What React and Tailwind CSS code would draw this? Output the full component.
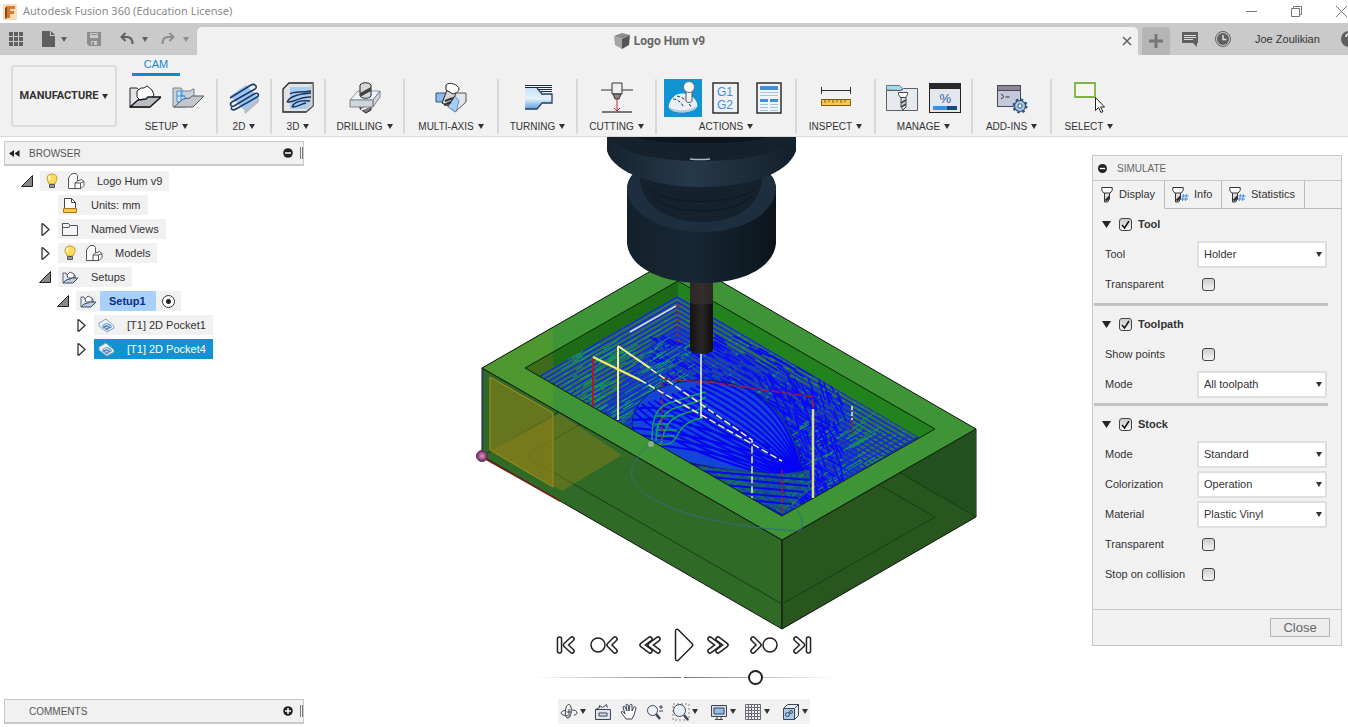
import React from "react";
import clsx from "clsx";

const Caret = ({ className }) => (
    <svg viewBox="0 0 6 5" className={clsx("h-[5px] w-[6px] shrink-0", className)} fill="currentColor">
        <path d="M0 0h6L3 5z" />
    </svg>
);

/* ---------- ribbon icons ---------- */

const SetupIcon = () => (
    <svg width="32" height="32" viewBox="0 0 32 32" strokeLinejoin="round">
        <path d="M1 6h7l3 3h10v16H1z" fill="#e4e4e8" stroke="#222" />
        <path d="M8 9l4-3h3l3-2 5 4 2 5-4 5-9 1-4-4z" fill="#fff" stroke="#222" />
        <path d="M1 25l8-7 8-1 2-2h13L21 25z" fill="#b9bdc4" stroke="#111" strokeWidth="1.4" />
    </svg>
);

const SetupFolderIcon = () => (
    <svg width="32" height="32" viewBox="0 0 32 32" strokeLinejoin="round">
        <path d="M1 6h8l2 3h7l3-2h1v9l-8 9H1z" fill="#c9d0d8" stroke="#77828e" />
        <path d="M5 9h5v5h3v6H5zM5 14h8M9 9v11" fill="#cde4fa" stroke="#3f8fd8" />
        <path d="M2 25l9-8 7-1 2-2h12L21 25z" fill="#c3c7cd" stroke="#555c66" />
    </svg>
);

const TwoDIcon = () => (
    <svg width="32" height="32" viewBox="0 0 32 32" fill="none">
        <path d="M2 14L18 3l13 13-15 12z" fill="#9fc6ef" />
        <path d="M16 28l15-12v4L17 32z" fill="#b8bcc2" />
        <path
            d="M2 16L23 3c4-2 7 2 4 4L4 20c-3 2-1 5 2 4l20-12c4-2 6 1 3 3L8 27c-3 2-6 0-4-2"
            stroke="#1b3a6b"
            strokeWidth="1.6"
        />
    </svg>
);

const ThreeDIcon = () => (
    <svg width="32" height="32" viewBox="0 0 32 32" fill="none">
        <path d="M1 7l6-6h24v23l-7 6H1z" fill="#e3e4e7" stroke="#222" strokeWidth="1.3" />
        <path d="M8 5h21v18l-6 4H8z" fill="#a8cdf3" />
        <path d="M31 1v23l-7 6V8z" fill="#c3c8cf" fillOpacity=".6" />
        <path
            d="M8 12c4-3 10-1 21-3M5 20c4-7 14-8 24-9M5 20c8 1 12-6 24-5M10 25c2-5 9-7 18-6M10 25c6 0 8-3 14-4"
            stroke="#1b3358"
            strokeWidth="1.5"
        />
    </svg>
);

const DrillingIcon = () => (
    <svg width="32" height="32" viewBox="0 0 32 32" strokeLinejoin="round">
        <path d="M11 23h11v5l-5 3-6-4z" fill="#7a7a7a" stroke="#222" />
        <path d="M12 28l9-4" stroke="#fff" strokeWidth="1.6" />
        <path d="M1 18L9 9h22l-7 9z" fill="#edf3fa" stroke="#8a9096" />
        <path d="M1 18h23v7H1zM24 18l7-9v6l-7 10z" fill="#cfd5dc" stroke="#7f868e" />
        <path d="M11 3c2-3 9-3 11 0v11c-2 3-9 3-11 0z" fill="#d8d8d8" stroke="#222" />
        <path d="M11 11l11-6v4l-11 6z" fill="#444" />
    </svg>
);

const MultiAxisIcon = () => (
    <svg width="32" height="32" viewBox="0 0 32 32" strokeLinejoin="round">
        <path d="M1 11h11v9H1z" fill="#8cbcec" stroke="#34506e" />
        <path d="M14 25l6-14h11v9l-11 10z" fill="#dfe5ec" stroke="#555" />
        <path d="M13 25l7-11 4 5-3 11z" fill="#a6cdf4" stroke="#6b92bb" />
        <path d="M12 8l9 4-8 12-6-3z" fill="#d5d5d5" stroke="#222" />
        <path d="M10 19l8-3M9 23l7-3" stroke="#333" strokeWidth="2.2" />
        <path d="M11 3c3-4 13 0 13 4-1 4-4 4-6 5l-7-4z" fill="#fff" stroke="#222" />
    </svg>
);

const TurningIcon = () => (
    <svg width="32" height="32" viewBox="0 0 32 32">
        <defs>
            <linearGradient id="turn" x1="0" y1="0" x2="0" y2="1">
                <stop offset="0" stopColor="#c9e1f8" />
                <stop offset=".5" stopColor="#e5f1fc" />
                <stop offset="1" stopColor="#5fa0e0" />
            </linearGradient>
        </defs>
        <path d="M3 6h12l5 6h10v9H20l-5 6H3z" fill="url(#turn)" />
        <path d="M3 27h12l5-6h10v-9H20l-5-6" fill="none" stroke="#25405f" strokeWidth="1.3" />
        <path d="M3 3.500h27M3 5.500h27M17 7.500h13M19 9.500h11" stroke="#1d2f48" />
    </svg>
);

const CuttingIcon = () => (
    <svg width="32" height="32" viewBox="0 0 32 32">
        <path d="M0 8h32" stroke="#333" />
        <path d="M11 1h10v11H11z" fill="#eceef2" stroke="#333" />
        <path d="M12 12h8l-2 5h-4z" fill="#888" stroke="#333" />
        <path d="M16 17v12M13 26l3 3 3-3" stroke="#c22" fill="none" />
        <path d="M1 30h30" stroke="#777" strokeWidth="2" />
    </svg>
);

const SimulateIcon = () => (
    <svg width="34" height="34" viewBox="0 0 34 34">
        <path d="M3 26c2-10 7-13 14-13s13 4 14 12c-2 7-26 8-28 1z" fill="#e9eff5" stroke="#fff" />
        <path d="M3 26c5 4 20 5 28-1-1 8-26 9-28 1z" fill="#b6c7d6" />
        <path d="M7 18c5 0 9 4 11 9M11 15c6 1 12 6 14 11" fill="none" stroke="#123a5c" strokeDasharray="3 2" />
        <path d="M20 8h6v12c-1 2-5 2-6 0z" fill="#f2f2f2" stroke="#555" />
        <circle cx="23" cy="6" r="5.5" fill="#f4f4f4" stroke="#66757f" />
        <path d="M19 5c2-2 6-2 8 0" stroke="#fff" fill="none" />
    </svg>
);

const PostIcon = () => (
    <svg width="28" height="34" viewBox="0 0 28 34">
        <rect x="1" y="2" width="25" height="30" fill="#eef0f3" stroke="#222" strokeWidth="1.4" />
        <text x="5" y="15" fontSize="12" fill="#3f8fe0" fontFamily="Liberation Sans">G1</text>
        <text x="5" y="28" fontSize="12" fill="#3f8fe0" fontFamily="Liberation Sans">G2</text>
    </svg>
);

const SheetIcon = () => (
    <svg width="28" height="34" viewBox="0 0 28 34">
        <rect x="2" y="2" width="24" height="30" fill="#f2f3f5" stroke="#222" strokeWidth="1.4" />
        <path d="M5 5h18v4H5zM5 18h8v3H5zM15 18h8v3h-8z" fill="#3f8fe0" />
        <path d="M5 11.500h18M5 14.500h18M5 23.500h8M15 23.500h8M5 26.500h8M15 26.500h8M5 29.500h8M15 29.500h8" stroke="#9fc4ea" />
    </svg>
);

const InspectIcon = () => (
    <svg width="32" height="32" viewBox="0 0 32 32">
        <path d="M2 8.500h28M1.500 5v7M30.500 5v7" stroke="#333" />
        <path d="M1.500 17.500h29v6h-29z" fill="#f7c64b" stroke="#7e5a14" />
        <path d="M5 18v3M9 18v2M13 18v3M17 18v2M21 18v3M25 18v2" stroke="#7e5a14" />
    </svg>
);

const LibraryIcon = () => (
    <svg width="32" height="32" viewBox="0 0 32 32">
        <path d="M.5 8V3.500h13l3 3-2 2z" fill="#a9d8ea" stroke="#5b7a8a" />
        <path d="M.5 8.500h15l2-2h14v22H.5z" fill="#e6e9ed" stroke="#596069" />
        <path d="M15 15h5v10l-3 3-2-3z" fill="#ddd" stroke="#444" />
        <path d="M15 21l5-3M15 25l5-3" stroke="#444" strokeWidth="1.5" />
        <path d="M12.500 10.500h9v2l-2 3h-5l-2-3z" fill="#fff" stroke="#444" />
    </svg>
);

const PercentIcon = () => (
    <svg width="32" height="32" viewBox="0 0 32 32">
        <rect x=".5" y="1.500" width="31" height="29" fill="#e4e7eb" stroke="#222" />
        <path d="M0 1h32v6H0z" fill="#26282b" />
        <text x="10.500" y="21" fontSize="13" fill="#2b62a8" fontFamily="Liberation Sans">%</text>
        <path d="M4 24h14v4H4z" fill="#3f8fe0" />
        <path d="M18 24h10v4H18z" fill="#164a7c" />
    </svg>
);

const AddInsIcon = () => (
    <svg width="32" height="32" viewBox="0 0 32 32">
        <rect x="1.500" y="3.500" width="23" height="21" fill="#c3c8da" stroke="#444a58" />
        <path d="M2 4h22v4H2z" fill="#8d8795" />
        <path d="M2 8.500h22" stroke="#444a58" />
        <path d="M5 12l3 2.500L5 17M9.500 15h4" fill="none" stroke="#333" />
        <circle cx="24" cy="24" r="5.500" fill="#a9c8ea" stroke="#2c5078" strokeWidth="1.200" />
        <circle cx="24" cy="24" r="6.500" fill="none" stroke="#2c5078" strokeWidth="2" strokeDasharray="2.500 2.600" />
        <circle cx="24" cy="24" r="2.200" fill="#fff" stroke="#2c5078" />
    </svg>
);

const SelectIcon = () => (
    <svg width="32" height="32" viewBox="0 0 32 32">
        <path d="M2 1h20v14H2z" fill="#f5f6f2" stroke="#7cb342" strokeWidth="1.800" />
        <path d="M22.500 15.500v13l3-3 2.500 5 2-1-2.500-4.500h4z" fill="#fff" stroke="#222" />
    </svg>
);

const groups = [
    { label: "SETUP", width: "w-[101px]", icons: [SetupIcon, SetupFolderIcon] },
    { label: "2D", width: "w-[54px]", icons: [TwoDIcon] },
    { label: "3D", width: "w-[54px]", icons: [ThreeDIcon] },
    { label: "DRILLING", width: "w-[79px]", icons: [DrillingIcon] },
    { label: "MULTI-AXIS", width: "w-[94px]", icons: [MultiAxisIcon] },
    { label: "TURNING", width: "w-[79px]", icons: [TurningIcon] },
    { label: "CUTTING", width: "w-[79px]", icons: [CuttingIcon] },
    { label: "ACTIONS", width: "w-[140px]", icons: [SimulateIcon, PostIcon, SheetIcon], active: 0 },
    { label: "INSPECT", width: "w-[79px]", icons: [InspectIcon] },
    { label: "MANAGE", width: "w-[97px]", icons: [LibraryIcon, PercentIcon] },
    { label: "ADD-INS", width: "w-[79px]", icons: [AddInsIcon] },
    { label: "SELECT", width: "w-[74px]", icons: [SelectIcon] },
];

/* ---------- window chrome ---------- */

const TitleBar = () => (
    <header className="flex h-[23px] items-center overflow-hidden bg-white pl-[3px]">
        <svg width="14" height="16" viewBox="0 0 14 16">
            <rect width="14" height="16" rx="1" fill="#fbdcb8" />
            <path d="M4 2h8v3H7v2h4v3H7v4H4z" fill="#d9792b" />
            <path d="M4 2L2 4v11l2-1z" fill="#8a4a1c" />
        </svg>
        <h1 className="ml-[6px] font-['Noto_Sans'] text-[11px] text-[#8a8a8a]">
            Autodesk Fusion 360 (Education License)
        </h1>
        <div className="-mr-1 ml-auto flex gap-[34px] text-[#777]">
            <button aria-label="Minimize">
                <svg width="11" height="11" viewBox="0 0 11 11" stroke="currentColor"><path d="M0 5.500h11" /></svg>
            </button>
            <button aria-label="Restore">
                <svg width="11" height="11" viewBox="0 0 11 11" stroke="currentColor" fill="none">
                    <path d="M.5 2.500h8v8h-8zM2.500 2.500v-2h8v8h-2" />
                </svg>
            </button>
            <button aria-label="Close window" className="pr-[5px]">
                <svg width="11" height="11" viewBox="0 0 11 11" stroke="currentColor"><path d="M0 0l11 11M11 0L0 11" /></svg>
            </button>
        </div>
    </header>
);

const TabBar = () => (
    <div className="flex h-8 overflow-hidden bg-[#cacaca] text-[#5f5f5f]">
        <div className="flex w-[197px] shrink-0 items-center pl-[9px]">
            <button aria-label="Data panel">
                <svg width="14" height="14" viewBox="0 0 14 14" fill="currentColor">
                    <path d="M0 0h4v4H0zM5 0h4v4H5zM10 0h4v4h-4zM0 5h4v4H0zM5 5h4v4H5zM10 5h4v4h-4zM0 10h4v4H0zM5 10h4v4H5zM10 10h4v4h-4z" />
                </svg>
            </button>
            <button aria-label="File" className="ml-[19px] flex items-center gap-[6px]">
                <svg width="13" height="16" viewBox="0 0 13 16" fill="currentColor"><path d="M0 0h8v5h5v11H0zM9 0l4 4H9z" /></svg>
                <Caret />
            </button>
            <button aria-label="Save" className="ml-5 text-[#8d8d8d]">
                <svg width="14" height="14" viewBox="0 0 14 14" fill="currentColor" fillRule="evenodd">
                    <path d="M0 0h14v14H2l-2-2zM3 1v5h8V1zM4 9v4h6V9zM5 10h2v3H5zM4 2h6v1H4z" />
                </svg>
            </button>
            <button aria-label="Undo" className="ml-[19px] flex items-center gap-2">
                <svg width="14" height="14" viewBox="0 0 14 14" fill="none" stroke="currentColor" strokeWidth="2">
                    <path d="M5.500 1L1.500 5l4 4M2 5h5c4 0 5.500 2 5.500 7" />
                </svg>
                <Caret />
            </button>
            <button aria-label="Redo" className="ml-[13px] flex items-center gap-2 text-[#8d8d8d]">
                <svg width="14" height="14" viewBox="0 0 14 14" fill="none" stroke="currentColor" strokeWidth="2">
                    <path d="M8.500 1l4 4-4 4M12 5H7c-4 0-5.500 2-5.500 7" />
                </svg>
                <Caret />
            </button>
        </div>
        <div className="mt-1 flex flex-1 items-center rounded-t-[5px] bg-[#f1f1f1] pr-[6px]">
            <div className="flex flex-1 items-center justify-center gap-1 font-['Roboto'] text-[12px] font-bold text-[#666]">
                <svg width="16" height="16" viewBox="0 0 16 16">
                    <path d="M0 3l8-3 8 2-8 4z" fill="#8a8a8a" />
                    <path d="M0 3l8 3v10l-7-4z" fill="#a5a5a5" />
                    <path d="M8 6l8-4-1 10-7 4z" fill="#555" />
                </svg>
                Logo Hum v9
            </div>
            <button aria-label="Close tab">
                <svg width="10" height="10" viewBox="0 0 10 10" stroke="currentColor" strokeWidth="1.500"><path d="M1 1l8 8M9 1L1 9" /></svg>
            </button>
        </div>
        <div className="flex w-[210px] shrink-0 items-center pl-1">
            <button aria-label="New tab" className="mt-1 flex h-7 w-7 shrink-0 items-center justify-center rounded-t bg-[#b5b5b5] text-[#777]">
                <svg width="14" height="14" viewBox="0 0 14 14" stroke="currentColor" strokeWidth="3"><path d="M7 0v14M0 7h14" /></svg>
            </button>
            <button aria-label="Notifications" className="ml-3 shrink-0">
                <svg width="16" height="15" viewBox="0 0 16 15">
                    <path d="M0 0h16v11h-1v4l-4-4H0z" fill="currentColor" />
                    <path d="M2 3.500h12M2 5.500h12M2 7.500h9" stroke="#ddd" />
                </svg>
            </button>
            <button aria-label="Job status" className="ml-[17px] shrink-0">
                <svg width="16" height="16" viewBox="0 0 16 16">
                    <circle cx="8" cy="8" r="7.500" fill="none" stroke="currentColor" />
                    <circle cx="8" cy="8" r="6" fill="currentColor" />
                    <path d="M8 4v4.500h3.500" stroke="#ddd" strokeWidth="1.500" fill="none" />
                </svg>
            </button>
            <button className="ml-6 shrink-0 text-[11px] whitespace-nowrap text-[#333]">Joe Zoulikian</button>
            <button aria-label="Help" className="ml-[21px] shrink-0">
                <svg width="16" height="16" viewBox="0 0 16 16">
                    <circle cx="8" cy="8" r="8" fill="currentColor" />
                    <path d="M5 6c0-4 6-4 6 0 0 2-3 2-3 4M8 11v2" stroke="#eee" strokeWidth="1.500" fill="none" />
                </svg>
            </button>
        </div>
    </div>
);

const Ribbon = () => (
    <div className="flex overflow-hidden border-b border-[#dadada] bg-[#f1f1f1] pl-[11px]">
        <button className="mt-[10px] flex h-[62px] w-[106px] shrink-0 items-center justify-center gap-1 rounded border-2 border-[#dcdcdc] font-['Roboto'] text-[11px] font-bold text-[#333]">
            MANUFACTURE
            <Caret />
        </button>
        <div className="flex flex-col">
            <button className="ml-[15px] h-[21px] w-12 border-b-[3px] border-[#1488c8] text-[11px] text-[#1488c8]">CAM</button>
            <div className="mt-[3px] mb-[2px] flex">
                {groups.map((g, n) => (
                    <div
                        key={g.label}
                        className={clsx(
                            "flex shrink-0 flex-col items-center border-[#d9d9d9]",
                            g.width,
                            n < groups.length - 1 && "border-r-2"
                        )}
                    >
                        <div className="flex gap-[5px]">
                            {g.icons.map((Icon, i) => (
                                <button
                                    key={i}
                                    aria-label={`${g.label} ${i + 1}`}
                                    className={clsx("flex h-[38px] w-[38px] items-center justify-center", g.active === i && "bg-[#0f93d2]")}
                                >
                                    <Icon />
                                </button>
                            ))}
                        </div>
                        <button className="mt-[1px] flex h-4 items-center gap-1 text-[10px] whitespace-nowrap text-[#333]">
                            {g.label}
                            <Caret />
                        </button>
                    </div>
                ))}
            </div>
        </div>
    </div>
);

/* ---------- browser tree ---------- */

const BulbIcon = () => (
    <svg width="12" height="16" viewBox="0 0 12 16">
        <path d="M6 1c6 0 6 6 3 9v1H3v-1C0 7 0 1 6 1z" fill="#fddc5c" stroke="#c79a2c" />
        <path d="M4 3c-1 1-1 3 0 4" stroke="#fff" strokeWidth="1.500" fill="none" />
        <path d="M3.500 11.500h5v3h-5z" fill="#9a9a9a" stroke="#555" />
    </svg>
);

const BodyIcon = () => (
    <svg width="17" height="16" viewBox="0 0 17 16" fill="#fbfbfb" stroke="#555" strokeLinejoin="round">
        <path d="M.5 5l2.500-3.500L5 .5h3l1.500 2V8l4-1.500 2.500 2v4L13 15.500H.5z" />
        <path d="M7 15.500V10l2.500-2M7 10h5.500L16 8.500M12.500 10v5" fill="none" />
    </svg>
);

const UnitsIcon = () => (
    <svg width="16" height="17" viewBox="0 0 16 17">
        <path d="M2.500 12V1.500h7l4 4V12" fill="#fff" stroke="#444" />
        <path d="M9.500 1.500v4h4" fill="none" stroke="#444" />
        <path d="M1.500 11.500h13v4h-13z" fill="#f7c64b" stroke="#a87812" />
    </svg>
);

const FolderIcon = () => (
    <svg width="16" height="13" viewBox="0 0 16 13">
        <path d="M.5 12.500V.5h6l1.500 2h7.500v10z" fill="#f4f5f8" stroke="#555" />
        <path d="M1 4.500h6l1-2" fill="none" stroke="#555" />
    </svg>
);

const SetupsIcon = () => (
    <svg width="17" height="13" viewBox="0 0 17 13" strokeLinejoin="round">
        <path d="M1 12V2h3l1 2h8v5" fill="#e6ecf5" stroke="#555f74" />
        <path d="M5 4l3-3 4 2v4H6z" fill="#fff" stroke="#555f74" />
        <path d="M1 12l3-3 4-1 2-1h6l-5 5z" fill="#bccbe0" stroke="#3e4c66" />
    </svg>
);

const PocketIcon = () => (
    <svg width="17" height="15" viewBox="0 0 17 15">
        <path d="M1 5l7-4 8 7v2l-7 4-8-6z" fill="#eef3f9" stroke="#8ba0b8" />
        <path d="M4 9c1-5 8-5 10 0l-5 3.500z" fill="#4f86c4" />
        <path d="M5 8.500c2-3 6-2 7.500.500M7 10.500c1-2 3-1 3.500 0" stroke="#fff" fill="none" />
    </svg>
);

const tree = [
    { label: "Logo Hum v9", pad: "pl-[14px]", arrow: "open", icons: [BulbIcon, BodyIcon] },
    { label: "Units: mm", pad: "pl-8", icons: [UnitsIcon] },
    { label: "Named Views", pad: "pl-8", arrow: "closed", icons: [FolderIcon] },
    { label: "Models", pad: "pl-8", arrow: "closed", icons: [BulbIcon, BodyIcon] },
    { label: "Setups", pad: "pl-8", arrow: "open", icons: [SetupsIcon] },
    { label: "Setup1", pad: "pl-[50px]", arrow: "open", icons: [SetupsIcon], current: true },
    { label: "[T1] 2D Pocket1", pad: "pl-[68px]", arrow: "closed", icons: [PocketIcon] },
    { label: "[T1] 2D Pocket4", pad: "pl-[68px]", arrow: "closed", icons: [PocketIcon], selected: true },
];

const TreeRow = ({ row }) => (
    <li className={clsx("flex h-6 items-center", row.pad)}>
        <span className="mr-1 flex w-[18px] justify-center">
            {row.arrow === "open" && (
                <svg width="12" height="12" viewBox="0 0 12 12"><path d="M11.500.5v11H.5z" fill="#888" stroke="#222" /></svg>
            )}
            {row.arrow === "closed" && (
                <svg width="9" height="13" viewBox="0 0 9 13"><path d="M1 1h1l6 5.500L2 12H1z" fill="#fff" stroke="#333" strokeWidth="1.300" /></svg>
            )}
        </span>
        <div className={clsx("flex h-5 items-center", row.selected ? "bg-[#0f93d2] text-white" : "bg-[#f1f1f1] text-[#333]")}>
            {row.icons.map((Icon, i) => (
                <span key={i} className="flex w-6 justify-center"><Icon /></span>
            ))}
            <span className={clsx("flex h-full items-center pl-[9px]", row.current ? "bg-[#a9cffb] pr-[10px] font-bold text-[#0b2d77]" : "pr-[7px]")}>
                {row.label}
            </span>
            {row.current && (
                <input
                    type="radio"
                    defaultChecked
                    aria-label="Active setup"
                    className="mx-[6px] h-[13px] w-[13px] appearance-none rounded-full border border-[#333] bg-white bg-[radial-gradient(#222_2px,transparent_3px)]"
                />
            )}
        </div>
    </li>
);

const PanelBar = ({ title, open }) => (
    <div className="flex h-[25px] items-center border border-b-2 border-[#c9c9c9] bg-[#f1f1f1] pl-1 text-[10px] text-[#555]">
        <span className="w-5">
            {open && (
                <svg width="11" height="7" viewBox="0 0 11 7" fill="#222"><path d="M5 0v7L0 3.500zM10.500 0v7l-5-3.500z" /></svg>
            )}
        </span>
        <h2>{title}</h2>
        <button className="ml-auto" aria-label={`Toggle ${title}`}>
            <svg width="10" height="10" viewBox="0 0 10 10">
                <circle cx="5" cy="5" r="4.800" fill="#222" />
                <path d={open ? "M2 5h6" : "M2 5h6M5 2v6"} stroke="#fff" strokeWidth="1.500" />
            </svg>
        </button>
        <span className="ml-[7px] h-3 w-[3px] border-x border-[#777]" />
    </div>
);

/* ---------- simulate panel ---------- */

const Check = ({ id, label, on }) => (
    <span className="relative inline-flex h-[13px] w-[13px]">
        <input
            id={id}
            type="checkbox"
            aria-label={label}
            defaultChecked={on}
            className="peer h-[13px] w-[13px] appearance-none rounded-[3px] border border-[#444] bg-linear-to-b from-[#cdcdcd] to-[#f4f4f4]"
        />
        <svg viewBox="0 0 13 13" className="pointer-events-none absolute inset-0 hidden peer-checked:block" fill="none" stroke="#111" strokeWidth="1.500">
            <path d="M3 7l2.500 3L10 3" />
        </svg>
    </span>
);

const Field = ({ id, label, options }) => (
    <div className="grid h-[30px] grid-cols-[92px_1fr] items-center pr-[14px] pl-3">
        <label htmlFor={id}>{label}</label>
        {options ? (
            <div className="relative">
                <select id={id} className="h-[27px] w-full appearance-none rounded-xs border-2 border-[#dedede] bg-white pl-[5px]">
                    {options.map((o) => <option key={o}>{o}</option>)}
                </select>
                <Caret className="pointer-events-none absolute top-[11px] right-[5px]" />
            </div>
        ) : (
            <span className="flex pl-[5px]"><Check id={id} /></span>
        )}
    </div>
);

const Section = ({ title, children }) => (
    <section>
        <h3 className="flex h-[30px] items-center pl-[9px] font-bold">
            <svg width="9" height="7" viewBox="0 0 9 7" fill="#222"><path d="M0 0h9L4.500 7z" /></svg>
            <span className="mr-[6px] ml-2 flex"><Check id={`show-${title}`} label={`Show ${title}`} on /></span>
            {title}
        </h3>
        {children}
    </section>
);

const Rule = () => <div className="mt-1 mr-[13px] mb-[3px] ml-[1px] h-[3px] bg-[#c2c2c2]" />;

const MillIcon = ({ hash }) => (
    <svg width={hash ? 17 : 12} height="17" viewBox={hash ? "0 0 17 17" : "0 0 12 17"} strokeLinejoin="round">
        <path d="M3.500 6h5v7l-2 3h-3z" fill="#ddd" stroke="#333" />
        <path d="M4 13.500l4-4v4l-3 2z" fill="#333" />
        <path d="M.8 1.500h10.400v3l-2 2.500H2.800l-2-2.500z" fill="#fff" stroke="#333" />
        {hash && <path d="M11.500 8l-1 7M14.500 8l-1 7M9.500 10h7M9 13h7" stroke="#3f8fe0" fill="none" />}
    </svg>
);

const SimulatePanel = () => (
    <aside className="mt-[18px] mr-[6px] flex w-[250px] shrink-0 flex-col self-start border border-[#c8c8c8] bg-[#f1f1f1] text-[11px] text-[#333]">
        <div className="flex h-6 items-center gap-[10px] pl-[5px] text-[10px] text-[#666]">
            <svg width="9" height="9" viewBox="0 0 10 10">
                <circle cx="5" cy="5" r="5" fill="#222" />
                <path d="M2 5h6" stroke="#fff" strokeWidth="1.500" />
            </svg>
            <h2>SIMULATE</h2>
        </div>
        <div className="flex h-[29px] border-t border-[#c8c8c8]" role="tablist">
            <button role="tab" aria-selected="true" className="flex w-[72px] items-center gap-[6px] border-r border-b border-r-[#bbb] border-b-transparent pl-2">
                <MillIcon />Display
            </button>
            <button role="tab" className="flex w-[57px] items-center gap-[5px] border-r border-b border-[#bbb] pl-[7px]">
                <MillIcon hash />Info
            </button>
            <button role="tab" className="flex w-[83px] items-center gap-[5px] border-r border-b border-[#bbb] pl-[7px]">
                <MillIcon hash />Statistics
            </button>
            <span className="flex-1 border-b border-[#bbb]" />
        </div>
        <div className="pb-5">
            <Section title="Tool">
                <Field id="tool" label="Tool" options={["Holder", "Shaft", "Flute"]} />
                <Field id="tool-transparent" label="Transparent" />
            </Section>
            <Rule />
            <Section title="Toolpath">
                <Field id="points" label="Show points" />
                <Field id="path-mode" label="Mode" options={["All toolpath", "Tail"]} />
            </Section>
            <Rule />
            <Section title="Stock">
                <Field id="stock-mode" label="Mode" options={["Standard", "Fast"]} />
                <Field id="color" label="Colorization" options={["Operation", "Material"]} />
                <Field id="material" label="Material" options={["Plastic Vinyl", "Aluminum"]} />
                <Field id="stock-transparent" label="Transparent" />
                <Field id="stop" label="Stop on collision" />
            </Section>
        </div>
        <div className="flex h-9 items-center justify-end border-t border-[#c8c8c8] pr-[11px]">
            <button className="h-[19px] w-[60px] border border-[#b5b5b5] bg-[#ececec] text-[13px] leading-none text-[#666]">Close</button>
        </div>
    </aside>
);

/* ---------- playback and navigation ---------- */

// outlined stroke: dark line with a thinner white one on top
const Outline = ({ d, w, children }) => (
    <svg width={w} height="20" viewBox={`0 0 ${w} 20`} fill="none" strokeLinecap="round" strokeLinejoin="round">
        {d.map((p) => (
            <g key={p}>
                <path d={p} stroke="#222" strokeWidth="5.600" />
                <path d={p} stroke="#fff" strokeWidth="2.600" />
            </g>
        ))}
        {children}
    </svg>
);

const Playback = () => (
    <div className="flex h-[34px] items-center gap-[19px]">
        <div className="flex items-center gap-[14px]">
            <button aria-label="Go to start"><Outline w={20} d={["M3.500 4v12", "M16 4l-6.500 6 6.500 6"]} /></button>
            <button aria-label="Previous operation">
                <Outline w={29} d={["M25 4l-6 6 6 6"]}><circle cx="8" cy="10" r="7" fill="#fff" stroke="#222" strokeWidth="1.500" /></Outline>
            </button>
        </div>
        <div className="flex items-center gap-[12px]">
            <button aria-label="Step back"><Outline w={24} d={["M12 4l-8 6 8 6", "M20 4l-8 6 8 6"]} /></button>
            <button aria-label="Play">
                <svg width="20" height="34" viewBox="0 0 20 34">
                    <path d="M1.500 3c0-2 2-2 3-1L18 15.500c1 1 1 2 0 3L4.500 32c-1 1-3 1-3-1z" fill="#fff" stroke="#222" strokeWidth="1.500" />
                </svg>
            </button>
            <button aria-label="Step forward"><Outline w={24} d={["M4 4l8 6-8 6", "M12 4l8 6-8 6"]} /></button>
        </div>
        <div className="flex items-center gap-[14px]">
            <button aria-label="Next operation">
                <Outline w={29} d={["M4 4l6 6-6 6"]}><circle cx="21" cy="10" r="7" fill="#fff" stroke="#222" strokeWidth="1.500" /></Outline>
            </button>
            <button aria-label="Go to end"><Outline w={20} d={["M4 4l6.500 6L4 16", "M16.500 4v12"]} /></button>
        </div>
    </div>
);

const navTools = [
    {
        name: "Orbit", menu: true,
        art: <path d="M6 5c1-4 4-5 5-1 1 6-1 12-4 11-2-1-2-6-1-10zM6 7c-3 1-5 2-5 3 0 2 5 3 9 3M12 7c3 0 5 1 5 3 0 1-1 2-3 2M9 6v6M6.500 9h5" />,
    },
    { name: "Look at", art: <path d="M1.500 6.500h15v10h-15zM1.500 6.500l4-2v-2l3 2 4-3 1 3M5 10h8v3H5z" fill="#dfe3ea" /> },
    {
        name: "Pan",
        art: <path d="M6 16c-2-3-4-5-5-7 1-1 2-1 4 2L3 4c0-1 2-1 2 0l2 4-1-6c0-1 2-1 2 0l1 6 1-6c0-1 2-1 2 0v6l2-4c1-1 2 0 2 1l-2 7-2 4z" fill="#fff" />,
    },
    { name: "Zoom", art: <><circle cx="6.500" cy="7.500" r="5" fill="#eef4fa" /><path d="M10 11l4 5" strokeWidth="2.500" /><path d="M13 4h4M15 2v4M13 8h4" /></> },
    { name: "Fit", menu: true, art: <><path d="M1 1h16v16H1z" strokeDasharray="2 2" stroke="#888" /><circle cx="7.500" cy="7.500" r="6" fill="#e6f0f8" /><path d="M12 12l4 5" strokeWidth="2.500" /></> },
    { name: "Display settings", menu: true, gap: true, art: <><path d="M1.500 2.500h15v11h-15z" fill="#ddd" /><path d="M4 5h10v6H4z" fill="#8fbdf0" stroke="#345" /><path d="M7 14v2M11 14v2M5 16.500h8" /></> },
    { name: "Grid", menu: true, art: <path d="M1.500 1.500h15v15h-15zM4.500 1v16M7.500 1v16M10.500 1v16M13.500 1v16M1 4.500h16M1 7.500h16M1 10.500h16M1 13.500h16" stroke="#666b75" /> },
    { name: "Viewports", menu: true, gap: true, art: <><path d="M1.500 5.500l4-4h11v11l-4 4z" fill="#e7ebf0" /><path d="M1.500 5.500h11v11h-11zM12.500 5.500l4-4" fill="#a9c9ee" /><circle cx="5.500" cy="11.500" r="2" /><circle cx="9" cy="9" r="1.500" /></> },
];

const NavBar = () => (
    <div className="mt-[14px] flex h-[25px] items-center gap-2 bg-[#f1f1f1] px-[2px]">
        {navTools.map((t) => (
            <button key={t.name} aria-label={t.name} className={clsx("flex items-center gap-[2px] text-[#333]", t.gap && "ml-1")}>
                <svg width="18" height="18" viewBox="0 0 18 18" fill="none" stroke="#3b4556">{t.art}</svg>
                {t.menu && <Caret />}
            </button>
        ))}
    </div>
);

/* ---------- 3D scene ---------- */

// small repeatable generator, so the cut marks stay the same on each render
const makeRandom = (seed) => () => {
    seed = (seed * 16807) % 2147483647;
    return seed / 2147483647;
};

const nestedPasses = Array.from({ length: 30 }, (_, k) => {
    const y = 297 + k * 5;
    return `M${677 - 140} ${y + 81}L677 ${y}L${677 + 245} ${y + 142}`;
}).join("");

const frontPasses = Array.from({ length: 14 }, (_, k) => {
    const x = 918 - k * 9;
    const y = 437 - k;
    return `M${x} ${y}l-136 78`;
}).join("");

const marks = (seed, count, x0, x1, y0, y1, right) => {
    const rnd = makeRandom(seed);
    let d = "";
    for (let i = 0; i < count; i++) {
        const x = Math.round(x0 + rnd() * (x1 - x0));
        const y = Math.round(y0 + rnd() * (y1 - y0));
        const len = 4 + Math.round(rnd() * 14);
        d += `M${x} ${y}l${len} ${Math.round(len * (right ? 0.58 : -0.58))}`;
    }
    return d;
};

// steep marks of the finishing passes right of the lens
const steepMarks = (() => {
    const rnd = makeRandom(211);
    let d = "";
    for (let i = 0; i < 190; i++) {
        const x = Math.round(755 + rnd() * 85);
        const y = Math.round(372 + rnd() * 130);
        d += `M${x} ${y}l${3 + Math.round(rnd() * 4)} ${8 + Math.round(rnd() * 8)}`;
    }
    return d;
})();

const lens = "M632 424C634 400 652 388 676 383C706 376 738 382 760 396C785 414 800 446 803 473C760 474 690 470 655 449C640 440 632 434 632 424Z";

const lensPasses = Array.from({ length: 16 }, (_, k) => {
    const t = k * 6;
    return `M${720 - t} ${378 + t / 3}C${762 - t} ${388 + t * 0.7} ${792 - t / 2} ${424 + t / 2} 802 ${474 + t / 8}`;
}).join("");

const Scene = () => (
    <svg viewBox="0 137 1348 590" preserveAspectRatio="xMidYMin meet" className="absolute inset-0 h-full w-full" aria-hidden="true">
        <defs>
            <clipPath id="pocket"><path d="M525 368L678 281L935 429L782 516Z" /></clipPath>
            <clipPath id="floor"><path d="M539 376L677 296L920 438L782 516Z" /></clipPath>
            <clipPath id="lens"><path d={lens} /></clipPath>
            <linearGradient id="cup">
                <stop offset="0" stopColor="#13212c" />
                <stop offset=".45" stopColor="#172733" />
                <stop offset="1" stopColor="#0b141b" />
            </linearGradient>
            <linearGradient id="flange">
                <stop offset="0" stopColor="#15232f" />
                <stop offset=".45" stopColor="#26394a" />
                <stop offset="1" stopColor="#13202b" />
            </linearGradient>
            <linearGradient id="shank">
                <stop offset="0" stopColor="#141111" />
                <stop offset=".5" stopColor="#2a2626" />
                <stop offset="1" stopColor="#0e0c0c" />
            </linearGradient>
            <radialGradient id="origin">
                <stop offset="0" stopColor="#e59acb" />
                <stop offset="1" stopColor="#6a2656" />
            </radialGradient>
        </defs>

        {/* stock block */}
        <g strokeLinejoin="round">
            <path d="M482 368L782 540V629L482 456Z" fill="#306a27" stroke="#111" />
            <path d="M976 429L782 540V629L976 517Z" fill="#28561e" stroke="#111" />
            <path d="M882 462L976 429V517Z" fill="#23501f" />
            <path d="M482 368L677 256L976 429L782 540Z" fill="#3f9437" />
        </g>
        <path d="M482 368L553 327V409Z" fill="#4d982f" />

        {/* hidden edges seen through the faces */}
        <path
            d="M579 400L482 456M600 413L525 456L782 604L935 517L860 474M976 517L882 462"
            fill="none"
            stroke="#153f10"
        />
        <path d="M490 377L553 413V487L490 450Z" fill="#8b7f1b" fillOpacity=".6" stroke="#a8921f" />
        <path d="M490 450L560 414L622 455L562 491Z" fill="#8b7f1b" fillOpacity=".45" />
        {/* top face again, over the hidden edges */}
        <path d="M482 368L525 368L782 516L935 429L976 429L782 540Z" fill="#3f9437" />
        <path d="M482 368H525L553 384V409Z" fill="#4d982f" />

        {/* pocket with the toolpath */}
        <g clipPath="url(#pocket)">
            <path d="M525 368L678 281V400L560 470Z" fill="#1d6a17" />
            <path d="M525 368L553 352V400Z" fill="#3f6a1a" />
            <path d="M678 281L935 429L900 480L678 370Z" fill="#22821d" />
            <g clipPath="url(#floor)">
                <path d="M525 368L677 290L935 429L782 520Z" fill="#2c6f4c" />
                <path d="M650 345L677 325L850 405L860 470L782 520L600 413Z" fill="#1030d0" fillOpacity=".6" />
                <path d={marks(5, 330, 560, 900, 320, 515, false)} stroke="#18a253" />
                <path d={nestedPasses} fill="none" stroke="#1226e6" strokeWidth="1.600" />
                <path d={frontPasses} stroke="#1226e6" strokeWidth="1.300" />
                <path d={marks(91, 500, 650, 830, 335, 515, true)} stroke="#0a0af5" strokeWidth="1.500" />
                <path d={marks(37, 160, 560, 690, 345, 430, false)} stroke="#12a35a" />
                <path d={marks(13, 110, 780, 870, 420, 510, false)} stroke="#169a50" />
                <path d={steepMarks} stroke="#0a0af5" strokeWidth="1.500" />
            </g>
            <path d={lens} fill="#1346d6" stroke="#101c60" />
            <g clipPath="url(#lens)">
                <path d={lensPasses} fill="none" stroke="#0505f2" strokeWidth="2.200" />
                <path
                    d="M628 428C680 430 740 448 806 468M628 434C680 438 740 454 806 472M640 444C690 446 740 460 806 476M632 420C670 416 720 430 790 462M640 408C670 406 710 416 770 448"
                    fill="none"
                    stroke="#0505f2"
                    strokeWidth="2.200"
                />
            </g>
            <path d="M690 466l90 8 30-4v20l-28 24-88-46z" fill="#1c7a48" fillOpacity=".55" />
            <path d="M690 470l120 10M700 476l108 10M712 484l92 8M728 492l70 6M746 500l46 4M650 450l132 65" stroke="#0808ee" strokeWidth="2" />
            <path
                d="M652 440c0-22 4-34 20-38s24-8 34-10M656 441c0-20 8-30 22-34s18-4 28-10M661 444c4-20 10-26 22-30 8-4 18-2 24-10M655 430h22M655 424h14M656 416h18M657 436h18M657 444c8 2 16 0 20-8s10-16 26-18"
                fill="none"
                stroke="#12a35a"
                strokeWidth="1.500"
            />
        </g>
        <path d="M525 368L678 281L935 429L782 516Z" fill="none" stroke="#0c220a" />
        <path d="M482 368L677 256L976 429L782 540Z" fill="none" stroke="#111" />

        {/* links and rapid moves */}
        <g fill="none" strokeWidth="1.500">
            <path d="M593 357V406" stroke="#b3162a" strokeWidth="2" />
            <path d="M678 304V346" stroke="#b3162a" strokeDasharray="4 3" />
            <path d="M662 379L716 383L813 397V409" stroke="#a3173d" strokeDasharray="9 2" />
            <path d="M662 381V445M782 470V514M852 420V434" stroke="#a3173d" strokeDasharray="6 3" />
            <path d="M593 357L640 380" stroke="#f4f060" strokeWidth="2" />
            <path d="M640 380L782 461M618 346L752 440V498" stroke="#f6f2a0" strokeDasharray="7 3" />
            <path d="M618 346V420M618 346L650 368" stroke="#f4f18a" strokeWidth="2" />
            <path d="M813 409V498" stroke="#dfdc86" strokeWidth="2.500" />
            <path d="M852 406V420" stroke="#eee" strokeDasharray="4 2" />
            <path d="M676 306L630 332" stroke="#d8d8e8" />
            <path d="M701 354V418" stroke="#f7f7d0" />
        </g>

        <path d="M650 444C636 456 626 470 635 484C655 510 720 527 800 531C804 528 802 516 797 510" fill="none" stroke="#2d6f84" />
        <circle cx="651" cy="444" r="3" fill="#8fb08a" />
        <path d="M483 370V456" stroke="#28408a" strokeDasharray="12 4" />
        <path d="M482 457L560 501" stroke="#7a1d12" strokeWidth="1.500" />
        <circle cx="482" cy="456" r="5.500" fill="url(#origin)" stroke="#5b3550" />

        {/* cutter and holder */}
        <path d="M690 275H713V350C711 355 692 355 690 350Z" fill="url(#shank)" />
        <path d="M690 275H713V303C707 305 696 305 690 303Z" fill="#38322f" fillOpacity=".7" />
        <path d="M627 188C629 165 660 156 702 156S774 165 776 188V243C774 268 742 283 702 283S629 268 627 243Z" fill="url(#cup)" />
        <path d="M627 188C629 165 660 156 702 156S774 165 776 188C776 212 744 232 702 232S627 212 627 188Z" fill="#1d2f3e" />
        <path d="M640 178H762C762 204 738 222 702 222S640 204 640 178Z" fill="#15222d" />
        <path d="M652 196C668 216 736 216 752 196M648 188C664 206 738 206 756 188" fill="none" stroke="#0d171f" />
        <path d="M607 137H796V151C788 174 748 187 702 187S614 174 607 151Z" fill="url(#flange)" />
        <path d="M610 137H793C784 153 748 161 702 161S619 153 610 137Z" fill="#15222c" />
        <path d="M636 137H768C750 142 730 143 702 143S650 142 636 137Z" fill="#0d161d" />
        <path d="M690 159Q700 160 710 159" stroke="#a9b7c2" strokeWidth="1.500" fill="none" />
    </svg>
);

const App = () => (
    <div className="flex min-h-screen flex-col overflow-hidden bg-white font-['Liberation_Sans',Arial,sans-serif]">
        <TitleBar />
        <TabBar />
        <Ribbon />
        <main className="relative flex flex-1">
            <Scene />
            <div className="relative flex flex-1">
                <div className="flex w-[304px] shrink-0 flex-col justify-between pt-1 pb-[3px] pl-1">
                    <div>
                        <PanelBar title="BROWSER" open />
                        <ul className="mt-[3px] text-[11px]">
                            {tree.map((row) => <TreeRow key={row.label} row={row} />)}
                        </ul>
                    </div>
                    <PanelBar title="COMMENTS" />
                </div>
                <div className="mr-7 flex flex-1 flex-col items-center justify-end pb-[3px]">
                    <Playback />
                    <input
                        type="range"
                        aria-label="Simulation position"
                        defaultValue="75"
                        className="mt-[7px] h-4 w-[301px] appearance-none bg-[linear-gradient(to_right,transparent,#777_49%,transparent_49%,transparent_50%,#777_50%,transparent)] bg-[length:100%_1px] bg-center bg-no-repeat [&::-webkit-slider-thumb]:h-[15px] [&::-webkit-slider-thumb]:w-[15px] [&::-webkit-slider-thumb]:appearance-none [&::-webkit-slider-thumb]:rounded-full [&::-webkit-slider-thumb]:border-2 [&::-webkit-slider-thumb]:border-[#222] [&::-webkit-slider-thumb]:bg-white"
                    />
                    <NavBar />
                </div>
                <SimulatePanel />
            </div>
        </main>
    </div>
);

export default App;
